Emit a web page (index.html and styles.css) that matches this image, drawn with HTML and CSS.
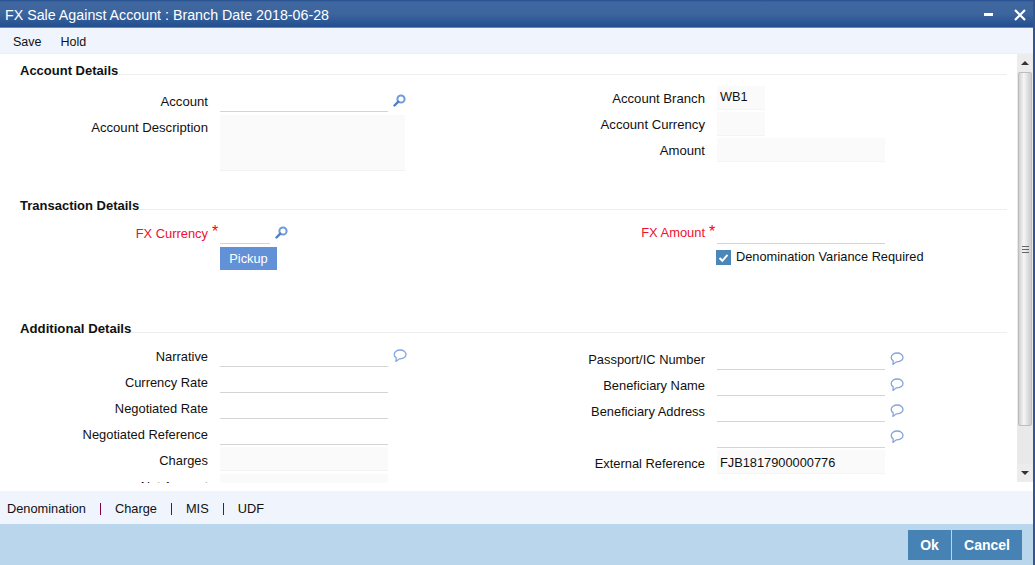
FILE: index.html
```html
<!DOCTYPE html>
<html lang="en">
<head>
<meta charset="utf-8">
<title>FX Sale Against Account</title>
<link rel="stylesheet" href="styles.css">
</head>
<body>
<svg class="defs" width="0" height="0" aria-hidden="true">
  <symbol id="search" viewBox="0 0 13 13">
    <circle cx="8" cy="5" r="3.6" fill="none" stroke="#6f9ad8" stroke-width="2"/>
    <path d="M5.300 7.700 1.500 11.500" stroke="#4f7fc4" stroke-width="2.400" stroke-linecap="round"/>
  </symbol>
  <symbol id="bubble" viewBox="0 0 14 13">
    <path d="M7.300 1C4 1 1.200 2.900 1.200 5.400c0 1.400.8 2.500 2 3.300L3 12.400l3.300-2.600h1c3.100 0 5.700-2 5.700-4.400S10.400 1 7.300 1Z" fill="#fff" stroke="#82a5dc" stroke-width="1.300"/>
  </symbol>
</svg>
<div class="window">
  <header class="titlebar">
    <h1>FX Sale Against Account : Branch Date 2018-06-28</h1>
    <div class="controls">
      <span class="minimize"></span>
      <svg class="close" viewBox="0 0 12 12"><path d="M1 1 11 11M11 1 1 11" stroke="#fff" stroke-width="2.200"/></svg>
    </div>
  </header>
  <nav class="toolbar"><span>Save</span><span>Hold</span></nav>

  <div class="body">
    <main class="form">
      <section class="section first">
        <h2>Account Details</h2>
        <div class="columns">
          <div class="col col-left">
            <div class="row"><label>Account</label><div class="field"><span class="input w168"></span><svg class="icon"><use href="#search"/></svg></div></div>
            <div class="row row-tall"><label>Account Description</label><div class="field"><span class="textarea"></span></div></div>
          </div>
          <div class="col col-right">
            <div class="row"><label>Account Branch</label><div class="field"><span class="box w48">WB1</span></div></div>
            <div class="row"><label>Account Currency</label><div class="field"><span class="box w48"></span></div></div>
            <div class="row"><label>Amount</label><div class="field"><span class="box w168"></span></div></div>
          </div>
        </div>
      </section>

      <section class="section second">
        <h2>Transaction Details</h2>
        <div class="columns">
          <div class="col col-tight">
            <div class="row"><label class="req">FX Currency</label><span class="star">*</span><div class="field"><span class="input w50"></span><svg class="icon"><use href="#search"/></svg></div></div>
            <div class="row-btn"><button class="pickup" type="button">Pickup</button></div>
          </div>
          <div class="col col-tight">
            <div class="row"><label class="req raised">FX Amount</label><span class="star">*</span><div class="field"><span class="input w168"></span></div></div>
            <div class="row row-check"><div class="field check">
              <span class="checkbox"><svg viewBox="0 0 15 15"><path d="M3.500 8 6.300 10.800 11.500 4.800" fill="none" stroke="#fff" stroke-width="2"/></svg></span>
              <span>Denomination Variance Required</span>
            </div></div>
          </div>
        </div>
      </section>

      <section class="section third">
        <h2>Additional Details</h2>
        <div class="columns">
          <div class="col col-tight">
            <div class="row"><label>Narrative</label><div class="field"><span class="input w168"></span><svg class="icon bubble"><use href="#bubble"/></svg></div></div>
            <div class="row"><label>Currency Rate</label><div class="field"><span class="input w168"></span></div></div>
            <div class="row"><label>Negotiated Rate</label><div class="field"><span class="input w168"></span></div></div>
            <div class="row"><label>Negotiated Reference</label><div class="field"><span class="input w168"></span></div></div>
            <div class="row"><label>Charges</label><div class="field"><span class="box w168"></span></div></div>
            <div class="row"><label>Net Amount</label><div class="field"><span class="box box-net w168"></span></div></div>
          </div>
          <div class="col col-right">
            <div class="row"><label>Passport/IC Number</label><div class="field"><span class="input w168"></span><svg class="icon bubble"><use href="#bubble"/></svg></div></div>
            <div class="row"><label>Beneficiary Name</label><div class="field"><span class="input w168"></span><svg class="icon bubble"><use href="#bubble"/></svg></div></div>
            <div class="row"><label>Beneficiary Address</label><div class="field"><span class="input w168"></span><svg class="icon bubble"><use href="#bubble"/></svg></div></div>
            <div class="row"><label></label><div class="field"><span class="input w168"></span><svg class="icon bubble"><use href="#bubble"/></svg></div></div>
            <div class="row"><label>External Reference</label><div class="field"><span class="box w168">FJB1817900000776</span></div></div>
          </div>
        </div>
      </section>
    </main>

    <aside class="scrollbar">
      <div class="sb-btn"><span class="arrow-up"></span></div>
      <div class="sb-thumb"><span class="grip"></span></div>
      <div class="sb-track"></div>
      <div class="sb-btn"><span class="arrow-down"></span></div>
    </aside>
  </div>

  <nav class="tabs">
    <span>Denomination</span><i></i><span>Charge</span><i></i><span>MIS</span><i></i><span>UDF</span>
  </nav>
  <footer class="footer">
    <button class="action ok" type="button">Ok</button>
    <button class="action cancel" type="button">Cancel</button>
  </footer>
</div>
</body>
</html>
```
FILE: styles.css
```css
* { box-sizing: border-box; }
html, body { margin: 0; height: 100%; overflow: hidden; }
body { font: 12.8px/16px "Liberation Sans", Arial, sans-serif; color: #111; background: #fff; }
.defs { position: absolute; }

.window { width: 1035px; height: 565px; display: flex; flex-direction: column; border-right: 2px solid #35558c; }

.titlebar { height: 28px; flex: none; display: flex; align-items: center; justify-content: space-between;
  background: linear-gradient(#24508f 0, #40679f 8%, #3c659e 50%, #234f90 95%, #8ea9c4 100%); color: #fff; padding: 1px 7px 0 5px; }
.titlebar h1 { margin: 0; font-size: 14.25px; font-weight: 400; }
.controls { display: flex; align-items: center; gap: 21px; }
.minimize { width: 9px; height: 3px; background: #fff; }
.close { width: 12px; height: 12px; }

.toolbar { height: 26px; flex: none; display: flex; gap: 19px; align-items: center; padding: 2px 0 0 13px; background: #eff4fd; border-bottom: 1px solid #eef0f3; font-size: 12.5px; }

.body { flex: none; height: 437px; display: flex; align-items: flex-start; background: #fff; }
.form { flex: 1; height: 429px; overflow: hidden; }

.section h2 { margin: 0; height: 16px; display: flex; font-size: 13px; font-weight: 700; padding: 1px 0 0 20px; margin-right: 10px; white-space: nowrap; }
.section.third h2 { padding-top: 0; font-size: 13.2px; }
.section h2::after { content: ""; flex: 1; height: 1px; margin-top: 11px; background: #eeeeee; }
.section.first { padding-top: 8px; }
.section.second { margin-top: 26px; }
.section.third { margin-top: 51px; }

.columns { display: grid; grid-template-columns: 497px 1fr; align-items: start; }
.col-left { padding-top: 10px; }
.col-right { padding-top: 7px; }
.col-tight { padding-top: 7px; }
.section.third .col-tight { padding-top: 6px; }
.section.third .col-right { padding-top: 9px; }

.row { display: grid; grid-template-columns: 208px 12px 1fr; height: 26px; align-items: center; }
.row label { grid-column: 1; text-align: right; padding-top: 2px; font-size: 12.9px; }
.first .row label { font-size: 13.15px; }
.second label.raised { padding-top: 0; }
.row .field { grid-column: 3; display: flex; align-items: center; }
.row-tall { height: auto; align-items: start; }
.row .row-tall label, .row-tall label { line-height: 26px; padding-top: 1px; }
.row-tall .field { padding-top: 1px; }
.req { color: #f01030; }
.star { grid-column: 2; color: #f00; font-size: 16px; padding-left: 4px; margin-top: -3px; }

.input { display: block; height: 22px; border-bottom: 1px solid #d4d4d4; }
.box { display: block; height: 24px; padding: 0 3px; line-height: 22px; background: #fafafa; border-bottom: 1px solid #f4f4f4; }
.third .box { margin-top: -3px; padding-top: 2px; }
.third .box-net { margin-top: 0; }
.textarea { display: block; width: 185px; height: 56px; background: #fafafa; border-bottom: 1px solid #f2f2f2; }
.w48 { width: 48px; }
.w50 { width: 50px; }
.w168 { width: 168px; }

.icon { width: 13px; height: 13px; margin-left: 5px; align-self: flex-start; position: relative; top: 4px; }
.bubble { width: 14px; height: 13px; }

.row-btn { padding: 1px 0 0 220px; height: 24px; }
.pickup { display: block; width: 57px; height: 23px; border: 0; padding: 0; background: #6391d7; color: #fff; font: 12.8px "Liberation Sans", Arial, sans-serif; }
.row-check { align-items: start; padding-top: 3px; height: 24px; }
.check { gap: 5px; margin-left: -1px; }
.checkbox { display: block; width: 15px; height: 15px; background: #4a86b8; }
.checkbox svg { display: block; width: 15px; height: 15px; }

.scrollbar { width: 16px; height: 428px; display: flex; flex-direction: column; background: #e9e9e9; }
.sb-btn { height: 18px; flex: none; display: flex; align-items: center; justify-content: center; background: #ececec; }
.arrow-up { border: 4px solid transparent; border-top: 0; border-bottom: 4px solid #333; }
.arrow-down { border: 4px solid transparent; border-bottom: 0; border-top: 4px solid #333; }
.sb-thumb { height: 354px; margin: 0 1px; flex: none; display: flex; align-items: center; justify-content: center;
  background: linear-gradient(90deg, #d0d0d0, #f6f6f6 40%, #d2d2d2 90%); border: 1px solid #bdbdbd; border-radius: 2px; }
.grip { width: 7px; height: 7px; background: repeating-linear-gradient(#666 0 1px, transparent 1px 3px); }
.sb-track { flex: 1; }

.tabs { height: 33px; flex: none; display: flex; align-items: center; padding: 2px 0 0 7px; background: #eff4fd; }
.tabs i { display: block; width: 1px; height: 12px; background: #800040; margin: 1px 14px 0; }

.footer { flex: 1; display: flex; justify-content: flex-end; gap: 1px; padding: 6px 11px 5px 0; background: #bad6ec; }
.action { border: 0; padding: 0; background: #4682b4; color: #fff; font: 700 14px "Liberation Sans", Arial, sans-serif; }
.ok { width: 43px; }
.cancel { width: 70px; }
```
